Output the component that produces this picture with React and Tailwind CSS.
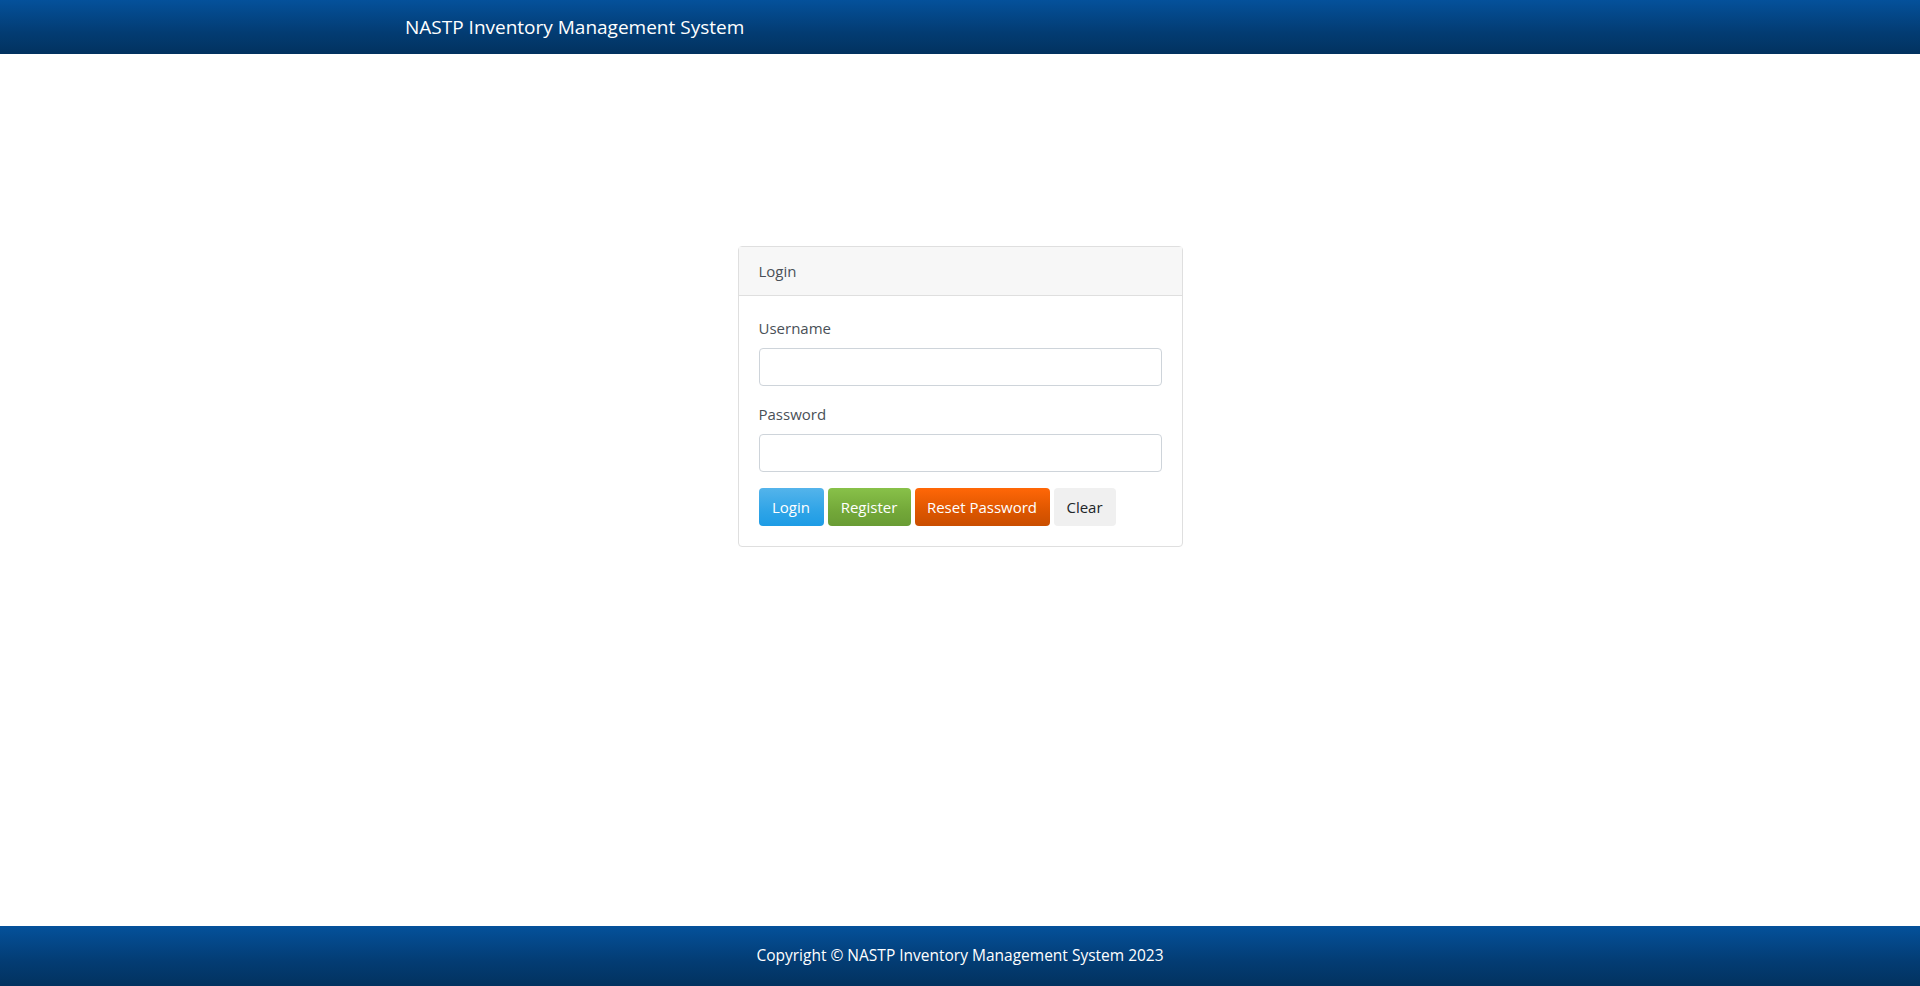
import React, { useState } from "react";

const fontStack = { fontFamily: '"Open Sans", "Noto Sans", sans-serif' };

const Header = () => (
  <nav className="h-[54px] bg-[linear-gradient(#04519b,#033c73_60%,#02325f)]">
    <div className="mx-auto max-w-[1140px] px-[15px] h-full flex items-center">
      <span className="text-white text-[19px] leading-[30px]">
        NASTP Inventory Management System
      </span>
    </div>
  </nav>
);

const Footer = () => (
  <footer className="h-[60px] shrink-0 flex items-center justify-center bg-[linear-gradient(#04519b,#033c73_60%,#02325f)]">
    <span className="text-white text-[15.5px]">
      Copyright © NASTP Inventory Management System 2023
    </span>
  </footer>
);

const LoginCard = () => {
  const [username, setUsername] = useState("");
  const [password, setPassword] = useState("");

  const clear = () => {
    setUsername("");
    setPassword("");
  };

  return (
    <div className="w-[445px] mx-auto mt-[192px] border border-[#dfdfdf] rounded-[4px] bg-white">
      <div className="h-[49px] px-5 flex items-center bg-[#f7f7f7] border-b border-[#dfdfdf] text-[15px] text-[#495057]">
        Login
      </div>
      <div className="p-5">
        <div className="mb-4">
          <label className="block mb-2 leading-6 text-[15px] text-[#495057]">
            Username
          </label>
          <input
            type="text"
            value={username}
            onChange={(e) => setUsername(e.target.value)}
            className="block w-full h-[38px] px-3 border border-[#ced4da] rounded-[4px] outline-none"
          />
        </div>
        <div className="mb-4">
          <label className="block mb-2 leading-6 text-[15px] text-[#495057]">
            Password
          </label>
          <input
            type="password"
            value={password}
            onChange={(e) => setPassword(e.target.value)}
            className="block w-full h-[38px] px-3 border border-[#ced4da] rounded-[4px] outline-none"
          />
        </div>
        <div className="flex gap-1 text-[15px]">
          <button className="h-[38px] w-[65px] rounded-[4px] text-white bg-[linear-gradient(#54b4eb,#2fa4e7_60%,#1d9ce5)]">
            Login
          </button>
          <button className="h-[38px] w-[83px] rounded-[4px] text-white bg-[linear-gradient(#88c149,#73a839_60%,#699c34)]">
            Register
          </button>
          <button className="h-[38px] w-[135px] rounded-[4px] text-white bg-[linear-gradient(#ff6707,#dd5600_60%,#c94e00)]">
            Reset Password
          </button>
          <button
            onClick={clear}
            className="h-[38px] w-[62px] rounded-[4px] text-[#212529] bg-[#f0f0f0]"
          >
            Clear
          </button>
        </div>
      </div>
    </div>
  );
};

const App = () => {
  return (
    <div className="h-screen flex flex-col bg-white overflow-hidden" style={fontStack}>
      <Header />
      <main className="flex-1">
        <LoginCard />
      </main>
      <Footer />
    </div>
  );
};

export default App;
